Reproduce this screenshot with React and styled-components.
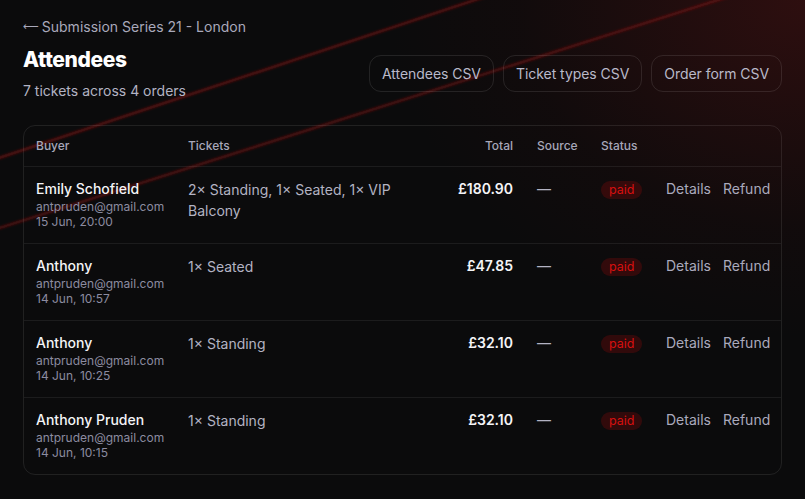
import React from "react";
import styled, { createGlobalStyle } from "styled-components";

const Global = createGlobalStyle`
  html, body { margin: 0; padding: 0; background: #0b0b0c; }
  body { font-family: Inter, "Noto Sans", sans-serif; -webkit-font-smoothing: antialiased; }
  * { box-sizing: border-box; }
`;

const Page = styled.div`
  position: relative;
  min-height: 100vh;
  overflow: hidden;
  background:
    radial-gradient(ellipse 520px 420px at 100% 0%, rgba(120, 22, 22, 0.32), rgba(60, 10, 10, 0.12) 55%, transparent 80%),
    #0b0b0c;
`;

const Decor = styled.svg`
  position: absolute;
  inset: 0;
  width: 100%;
  height: 100%;
  pointer-events: none;
  z-index: 0;
`;

const Content = styled.main`
  position: relative;
  z-index: 1;
  padding: 17px 23px 24px;
  display: flex;
  flex-direction: column;
`;

const BackLink = styled.a`
  font-size: 14px;
  line-height: 20px;
  color: #a9a9bb;
  text-decoration: none;
  display: flex;
  align-items: center;
  gap: 3px;
`;

const Arrow = styled.span`
  font-family: "DejaVu Sans", sans-serif;
  font-size: 11px;
  line-height: 20px;
`;

const HeaderRow = styled.div`
  margin-top: 9px;
  display: flex;
  align-items: center;
  justify-content: space-between;
`;

const TitleBlock = styled.div`
  display: flex;
  flex-direction: column;
  gap: 7px;
`;

const Title = styled.h1`
  margin: 0;
  font-size: 21px;
  line-height: 28px;
  font-weight: 800;
  letter-spacing: -0.4px;
  color: #ffffff;
`;

const Subtitle = styled.div`
  font-size: 14px;
  line-height: 20px;
  color: #b3b3c3;
`;

const Actions = styled.div`
  display: flex;
  gap: 9px;
`;

const CsvButton = styled.button`
  height: 37px;
  padding: 0 12px;
  border-radius: 12px;
  border: 1px solid rgba(255, 255, 255, 0.1);
  background: transparent;
  color: #b9b9c9;
  font-family: inherit;
  font-size: 14px;
  letter-spacing: -0.05px;
`;

const Card = styled.section`
  margin-top: 24px;
  border: 1px solid rgba(255, 255, 255, 0.09);
  border-radius: 12px;
`;

const cols = "152px 240px 109px 64px 65px 1fr";

const HeadRow = styled.div`
  display: grid;
  grid-template-columns: ${cols};
  border-bottom: 1px solid rgba(255, 255, 255, 0.07);
`;

const HeadCell = styled.div`
  padding: 12px;
  font-size: 12px;
  line-height: 16px;
  font-weight: 500;
  color: #a7a7b9;
  text-align: ${(p) => (p.$right ? "right" : "left")};
`;

const Row = styled.div`
  display: grid;
  grid-template-columns: ${cols};
  & + & {
    border-top: 1px solid rgba(255, 255, 255, 0.07);
  }
`;

const Cell = styled.div`
  padding: 12px 12px 14px;
  font-size: 14px;
  line-height: 20px;
  color: #b3b3c3;
  text-align: ${(p) => (p.$right ? "right" : "left")};
`;

const TicketsText = styled.div`
  line-height: 21px;
`;

const Name = styled.div`
  font-weight: 500;
  color: #f4f4f7;
`;

const Meta = styled.div`
  font-size: 12px;
  line-height: 15px;
  color: #8c8ca0;
`;

const Total = styled.span`
  font-weight: 600;
  color: #f4f4f7;
`;

const Pill = styled.span`
  display: inline-flex;
  align-items: center;
  justify-content: center;
  height: 18px;
  margin-top: 1px;
  padding: 0 8px;
  border-radius: 999px;
  background: rgba(150, 10, 10, 0.28);
  color: #d8100f;
  font-size: 12.5px;
`;

const LinkGroup = styled.div`
  display: flex;
  gap: 12px;
  justify-content: flex-end;
`;

const TextLink = styled.a`
  color: #aaaabd;
  text-decoration: none;
`;

const orders = [
  { name: "Emily Schofield", date: "15 Jun, 20:00", tickets: "2× Standing, 1× Seated, 1× VIP Balcony", total: "£180.90" },
  { name: "Anthony", date: "14 Jun, 10:57", tickets: "1× Seated", total: "£47.85" },
  { name: "Anthony", date: "14 Jun, 10:25", tickets: "1× Standing", total: "£32.10" },
  { name: "Anthony Pruden", date: "14 Jun, 10:15", tickets: "1× Standing", total: "£32.10" },
];

export default function App() {
  return (
    <Page>
      <Global />
      <Decor viewBox="0 0 805 499" preserveAspectRatio="none">
        <defs>
          <filter id="soft" x="-10%" y="-10%" width="120%" height="120%">
            <feGaussianBlur stdDeviation="0.8" />
          </filter>
        </defs>
        <g filter="url(#soft)">
          <line x1="-10" y1="161" x2="490" y2="-5" stroke="rgba(140,18,18,0.6)" strokeWidth="2.5" />
          <line x1="-10" y1="231" x2="740" y2="-7" stroke="rgba(140,18,18,0.55)" strokeWidth="2.5" />
        </g>
      </Decor>
      <Content>
        <BackLink href="#">
          <Arrow>⟵</Arrow>
          <span>Submission Series 21 - London</span>
        </BackLink>
        <HeaderRow>
          <TitleBlock>
            <Title>Attendees</Title>
            <Subtitle>7 tickets across 4 orders</Subtitle>
          </TitleBlock>
          <Actions>
            <CsvButton>Attendees CSV</CsvButton>
            <CsvButton>Ticket types CSV</CsvButton>
            <CsvButton>Order form CSV</CsvButton>
          </Actions>
        </HeaderRow>
        <Card>
          <HeadRow>
            <HeadCell>Buyer</HeadCell>
            <HeadCell>Tickets</HeadCell>
            <HeadCell $right>Total</HeadCell>
            <HeadCell>Source</HeadCell>
            <HeadCell>Status</HeadCell>
            <HeadCell />
          </HeadRow>
          {orders.map((o, i) => (
            <Row key={i}>
              <Cell>
                <Name>{o.name}</Name>
                <Meta>antpruden@gmail.com</Meta>
                <Meta>{o.date}</Meta>
              </Cell>
              <Cell>
                <TicketsText>{o.tickets}</TicketsText>
              </Cell>
              <Cell $right>
                <Total>{o.total}</Total>
              </Cell>
              <Cell>—</Cell>
              <Cell>
                <Pill>paid</Pill>
              </Cell>
              <Cell>
                <LinkGroup>
                  <TextLink href="#">Details</TextLink>
                  <TextLink href="#">Refund</TextLink>
                </LinkGroup>
              </Cell>
            </Row>
          ))}
        </Card>
      </Content>
    </Page>
  );
}
